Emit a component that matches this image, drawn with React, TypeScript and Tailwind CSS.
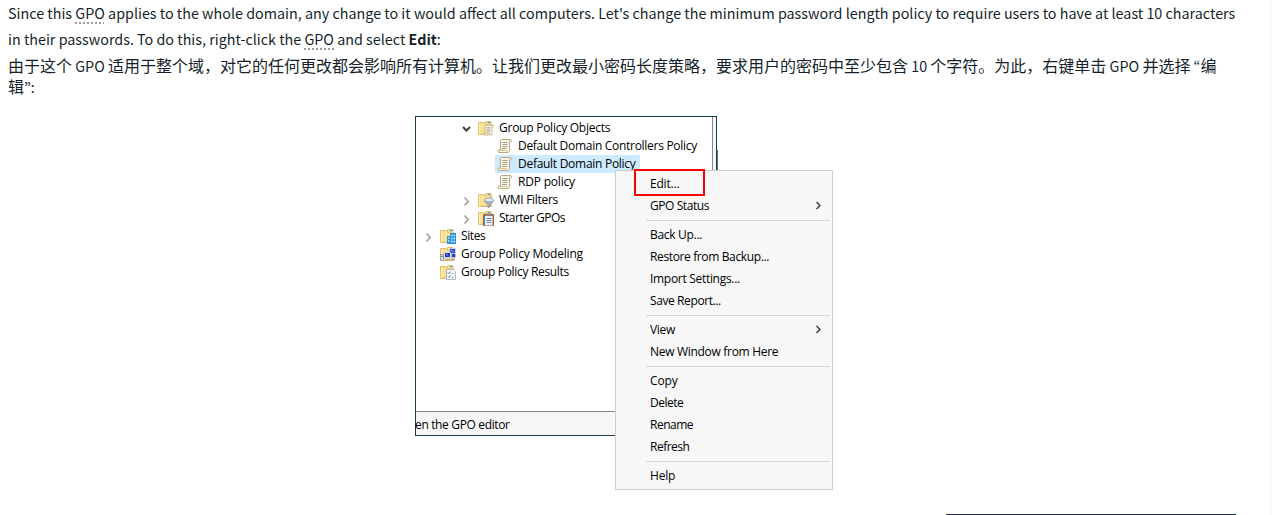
import type { ReactNode } from 'react';

type IconName = 'objects' | 'policy' | 'filters' | 'starter' | 'sites' | 'modeling' | 'results';

interface TreeItem {
  label: string;
  icon: IconName;
  indent: string;
  tracking: string;
  arrow?: 'open' | 'closed';
  selected?: boolean;
}

interface MenuItem {
  label: string;
  tracking: string;
  submenu?: boolean;
}

const treeItems: TreeItem[] = [
  { label: 'Group Policy Objects', icon: 'objects', indent: 'pl-[45px]', tracking: 'tracking-[-0.25px]', arrow: 'open' },
  { label: 'Default Domain Controllers Policy', icon: 'policy', indent: 'pl-[64px]', tracking: 'tracking-[-0.29px]' },
  { label: 'Default Domain Policy', icon: 'policy', indent: 'pl-[64px]', tracking: 'tracking-[-0.28px]', selected: true },
  { label: 'RDP policy', icon: 'policy', indent: 'pl-[64px]', tracking: 'tracking-[-0.2px]' },
  { label: 'WMI Filters', icon: 'filters', indent: 'pl-[45px]', tracking: 'tracking-[-0.3px]', arrow: 'closed' },
  { label: 'Starter GPOs', icon: 'starter', indent: 'pl-[45px]', tracking: 'tracking-[-0.55px]', arrow: 'closed' },
  { label: 'Sites', icon: 'sites', indent: 'pl-[7px]', tracking: 'tracking-[-0.4px]', arrow: 'closed' },
  { label: 'Group Policy Modeling', icon: 'modeling', indent: 'pl-[7px]', tracking: 'tracking-[-0.2px]' },
  { label: 'Group Policy Results', icon: 'results', indent: 'pl-[7px]', tracking: 'tracking-[-0.32px]' },
];

const menuGroups: MenuItem[][] = [
  [
    { label: 'Edit...', tracking: 'tracking-[-0.2px]' },
    { label: 'GPO Status', tracking: 'tracking-[-0.42px]', submenu: true },
  ],
  [
    { label: 'Back Up...', tracking: 'tracking-[-0.3px]' },
    { label: 'Restore from Backup...', tracking: 'tracking-[-0.37px]' },
    { label: 'Import Settings...', tracking: 'tracking-[-0.3px]' },
    { label: 'Save Report...', tracking: 'tracking-[-0.4px]' },
  ],
  [
    { label: 'View', tracking: 'tracking-[-0.3px]', submenu: true },
    { label: 'New Window from Here', tracking: 'tracking-[-0.3px]' },
  ],
  [
    { label: 'Copy', tracking: 'tracking-[-0.1px]' },
    { label: 'Delete', tracking: 'tracking-[-0.5px]' },
    { label: 'Rename', tracking: 'tracking-[-0.5px]' },
    { label: 'Refresh', tracking: 'tracking-[-0.5px]' },
  ],
  [{ label: 'Help', tracking: 'tracking-[-0.2px]' }],
];

function Folder() {
  return (
    <>
      <path d="M7.500 1.500h5.500v4H7.500z" fill="#fdf3cf" stroke="#e3bf6a" />
      <path d="M9.500 2.500h3" stroke="#4aa3e8" />
      <path d="M.5 2.500h5.500l1 1.500h6.500v10.500H.5z" fill="#fbe196" stroke="#e2bf68" />
      <path d="M1.500 4v9.500" stroke="#fef2c2" />
      <path d="M3 13.500h10" stroke="#f3d27d" />
    </>
  );
}

function Scroll() {
  return (
    <>
      <path
        d="M4.500 1.500h9c1.500 0 1.500 2.500 0 2.500h-1v8.500c0 1.500-.8 2-1.500 2H2c-1.500 0-1.500-2.500 0-2.500h1.500V3c0-1 .3-1.500 1-1.500z"
        fill="#fdf7df"
        stroke="#b5a989"
      />
      <path d="M2 12.500h7.500c.5 0 .5 1.500 1.300 2" fill="none" stroke="#cdbf94" />
      <path d="M12.500 2v1.500" stroke="#d9c384" />
      <path d="M5.500 4.500h5M5.500 6.500h5M5.500 8.500h5M5 10.500h5" stroke="#a09d98" />
    </>
  );
}

function NodeIcon({ name }: { name: IconName }) {
  return (
    <svg width="16" height="16" viewBox="0 0 16 16" className="shrink-0">
      {name === 'policy' ? <Scroll /> : <Folder />}
      {name === 'objects' && (
        <g transform="translate(4.500 4) scale(.76)">
          <Scroll />
        </g>
      )}
      {name === 'filters' && (
        <>
          <path d="M6 8.500l4 4v3l2-1v-2l4-4z" fill="#9fb9cb" stroke="#71889a" strokeWidth=".8" />
          <ellipse cx="11" cy="8" rx="4.700" ry="1.800" fill="#e3eef6" stroke="#7f98aa" strokeWidth=".8" />
        </>
      )}
      {name === 'starter' && (
        <>
          <path d="M5.500 4.500h10v11h-10z" fill="#b87852" stroke="#8e6350" />
          <path d="M7 6h7.500v9.500H7z" fill="#f0f6fd" />
          <path d="M6.500 6v9.500" stroke="#5f86b3" />
          <path d="M8.500 8.500h5M8.500 10.500h5M8.500 12.500h5" stroke="#6387bb" />
          <path d="M8.500 4.500h4" stroke="#85888c" strokeWidth="2" />
        </>
      )}
      {name === 'sites' && (
        <>
          <path d="M7 8h3V5h6v11H7z" fill="#2e95db" />
          <path
            d="M8 10h1.500M11 7.500h1.500M13.500 7.500H15M11 10.500h1.500M13.500 10.500H15M8 13h1.500M11 13.500h1.500M13.500 13.500H15"
            stroke="#c9eaff"
            strokeWidth="1.500"
          />
        </>
      )}
      {name === 'modeling' && (
        <>
          <path d="M9.500 2.500h6v5h-6z" fill="#3c4ac9" stroke="#cdd3e0" />
          <path d="M11.500 7.500h4v4h-4z" fill="#3340b5" stroke="#b9c0d0" />
          <path d="M4.500 6.500h6v5h-6z" fill="#2430b8" stroke="#d3d8e3" />
          <path d="M11 4l2.500 2M6 8l2.500 2" stroke="#9db2fa" />
          <path d="M.5 8.500h3v6h-3z" fill="#d9dee2" stroke="#96a0a6" />
          <path d="M1 10.500h2" stroke="#42b84e" />
          <path d="M5.500 13.500h4M11 13.500h4" stroke="#9ea5ad" strokeWidth="1.500" />
        </>
      )}
      {name === 'results' && (
        <>
          <path d="M6.500 5.500h7l2 2v8h-9z" fill="#fbfcfd" stroke="#adb4bb" />
          <path d="M8 8.500l1 1 1.500-2M8 12.500l1 1 1.500-2" fill="none" stroke="#3f6fb5" />
          <path d="M11.500 9.500H14M11.500 13.500H14" stroke="#a2acb6" />
        </>
      )}
    </svg>
  );
}

function TreeArrow({ state }: { state?: 'open' | 'closed' }) {
  return (
    <svg width="15" height="16" viewBox="0 0 15 16" className="shrink-0">
      {state === 'open' && <path d="M2 7l3.500 3.500L9 7" fill="none" stroke="#404040" strokeWidth="2" />}
      {state === 'closed' && <path d="M3.500 5.500L7.200 9.500l-3.700 4" fill="none" stroke="#a6a6a6" strokeWidth="1.800" />}
    </svg>
  );
}

function TreeRow({ item }: { item: TreeItem }) {
  return (
    <div className={`flex h-[18px] items-center ${item.indent}`}>
      <TreeArrow state={item.arrow} />
      <div className={`flex h-[18px] items-center gap-[5px] pl-[2px] pr-[4px] ${item.selected ? 'bg-[#cdebff]' : ''}`}>
        <NodeIcon name={item.icon} />
        <span className={item.tracking}>{item.label}</span>
      </div>
    </div>
  );
}

function PolicyTree() {
  return (
    <div className="flex h-[320px] w-[302px] flex-col border border-[#1b3a4b] bg-white">
      <div className="flex flex-1">
        <div className="flex w-[296px] flex-col pt-[2px]">
          {treeItems.map((item) => (
            <TreeRow key={item.label} item={item} />
          ))}
        </div>
        <div className="flex-1 border-l border-[#82879a] bg-[#f6f6f6]" />
      </div>
      <div className="flex h-[24px] items-center border-t border-[#7f888c] bg-[#f6f6f6] pt-[2px]">
        <span className="-ml-px tracking-[-0.35px]">en the GPO editor</span>
      </div>
    </div>
  );
}

function MenuRow({ item }: { item: MenuItem }) {
  return (
    <div className="flex h-[22px] items-center justify-between pl-[32px] pr-[8px]">
      <span className={item.tracking}>{item.label}</span>
      {item.submenu && (
        <svg width="7" height="9" viewBox="0 0 7 9" className="mb-px">
          <path d="M1.500 1l3.500 3.500L1.500 8" fill="none" stroke="#333" strokeWidth="1.300" />
        </svg>
      )}
    </div>
  );
}

function ContextMenu() {
  return (
    <div className="absolute left-[200px] top-[54px] w-[218px] border border-[#cccccc] bg-[#f7f7f7] p-[2px]">
      {menuGroups.map((group, index) => (
        <div key={group[0].label}>
          {index > 0 && <div className="my-[3px] ml-[28px] h-px bg-[#d7d7d7]" />}
          {group.map((item) => (
            <MenuRow key={item.label} item={item} />
          ))}
        </div>
      ))}
      <div className="absolute left-[18px] top-[-2px] h-[27px] w-[71px] border-2 border-[#ff0000]" />
    </div>
  );
}

function Term({ children }: { children: ReactNode }) {
  return (
    <abbr className="underline decoration-[#9a9a9a] decoration-dotted decoration-2 underline-offset-[3px]">
      {children}
    </abbr>
  );
}

// Latin runs inside the Chinese paragraph are set smaller, with proportional quotes
function Latin({ children }: { children: ReactNode }) {
  return (
    <span lang="en" className="font-['Noto_Sans_CJK_KR',sans-serif] text-[14.34px]">
      {children}
    </span>
  );
}

export default function App() {
  return (
    <div className="flex h-[515px] w-[1272px] overflow-hidden bg-white">
      <main className="flex w-[1270px] flex-col justify-between">
        <div>
          <section className="whitespace-nowrap pl-[8px] font-['Noto_Sans_CJK_SC',sans-serif] text-[14.34px] text-[#151f2b]">
            <p className="h-[26px] leading-[26px]">
              Since this <Term>GPO</Term> applies to the whole domain, any change to it would affect all computers. Let's
              change the minimum password length policy to require users to have at least 10 characters
            </p>
            <p className="h-[26px] leading-[26px]">
              in their passwords. To do this, right-click the <Term>GPO</Term> and select <b>Edit</b>:
            </p>
            <div lang="zh-CN" className="pt-[3px] text-[16px]">
              <p className="h-[21px] leading-[21px]">
                由于这个<Latin> GPO </Latin>适用于整个域，对它的任何更改都会影响所有计算机。让我们更改最小密码长度策略，要求用户的密码中至少包含
                <Latin> 10 </Latin>个字符。为此，右键单击<Latin> GPO </Latin>并选择<Latin> “</Latin>编
              </p>
              <p className="h-[22px] leading-[21px]">
                辑<Latin>”:</Latin>
              </p>
            </div>
          </section>
          <figure className="relative ml-[415px] mt-[18px] w-[418px] whitespace-nowrap font-['Open_Sans',sans-serif] text-[12px] leading-[18px] text-black">
            <PolicyTree />
            <div className="absolute left-[302px] top-[34px] h-[20px] w-px bg-[#6c6c6c]" />
            <ContextMenu />
          </figure>
        </div>
        <div className="ml-[946px] h-px w-[290px] rounded-tl-sm bg-[#1c2a43]" />
      </main>
      <div className="flex-1 bg-[#f7f8fa]" />
    </div>
  );
}
